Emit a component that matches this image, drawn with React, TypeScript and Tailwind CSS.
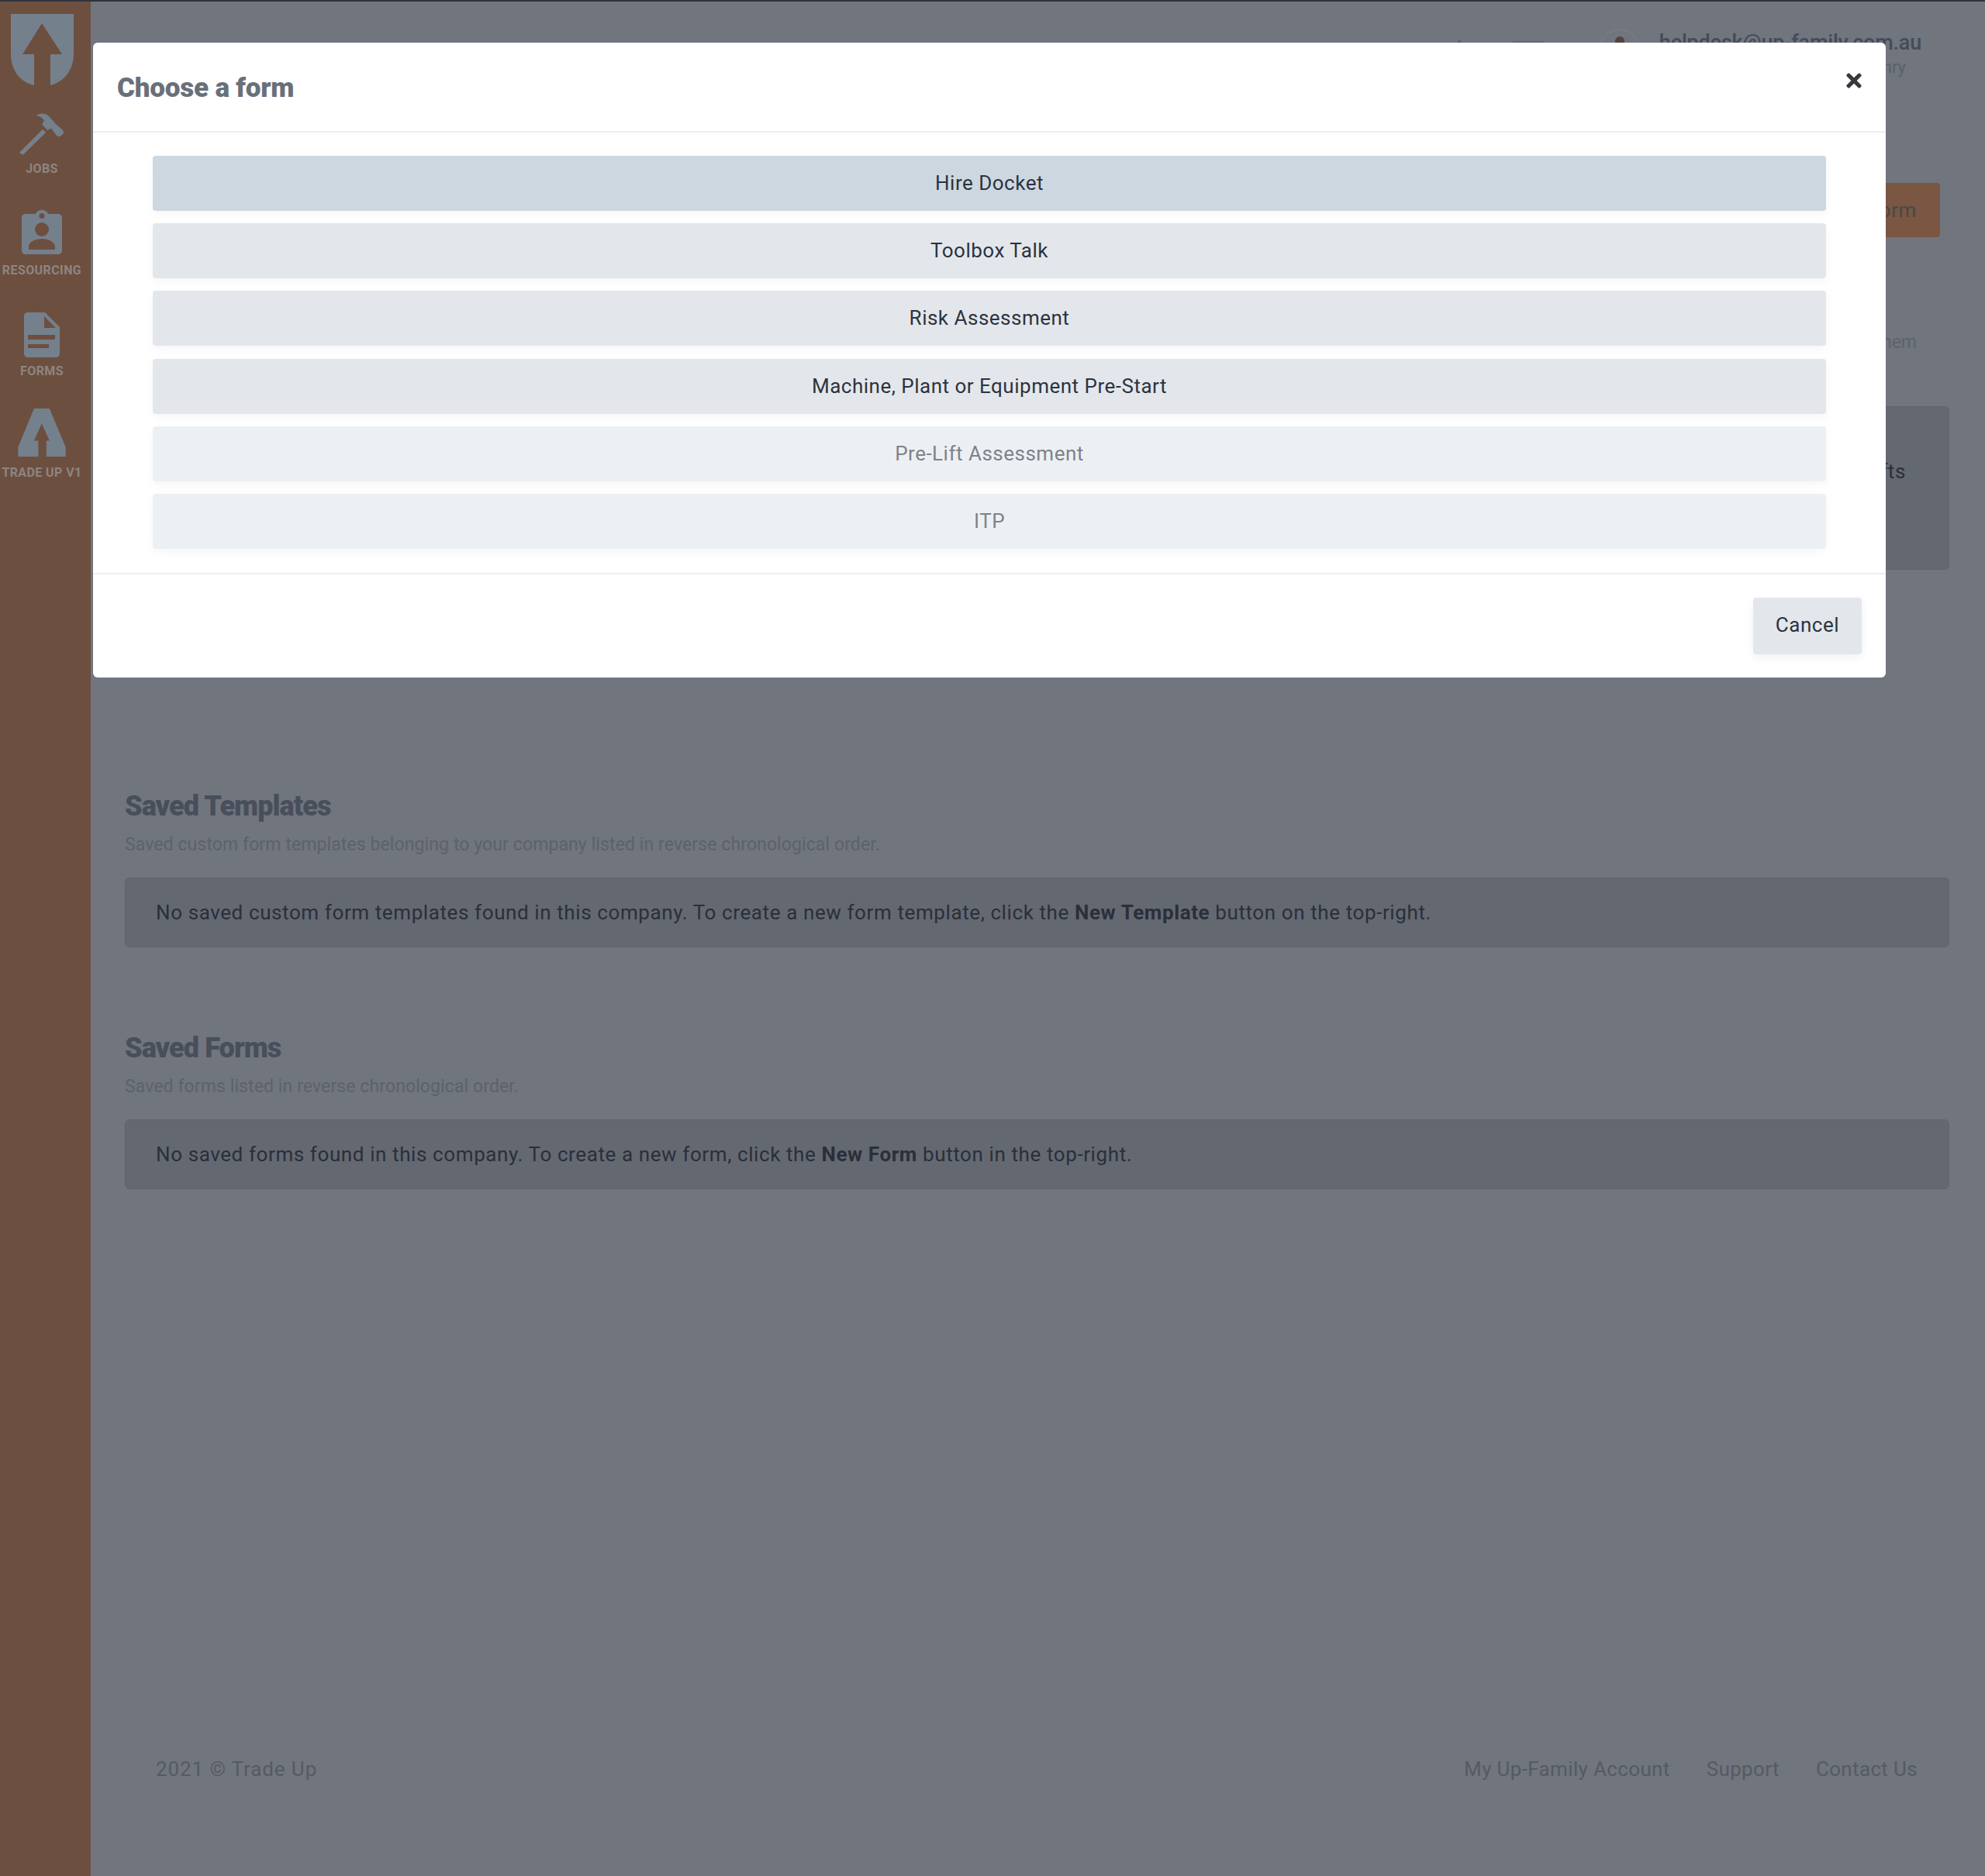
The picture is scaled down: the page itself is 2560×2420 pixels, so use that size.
import React from "react";
import { FaTimes } from "react-icons/fa";

const forms = [
  { label: "Hire Docket", cls: "bg-[#cdd7e0] text-[#2b3340]" },
  { label: "Toolbox Talk", cls: "bg-[#e3e7eb] text-[#2b3340]" },
  { label: "Risk Assessment", cls: "bg-[#e3e7eb] text-[#2b3340]" },
  { label: "Machine, Plant or Equipment Pre-Start", cls: "bg-[#e3e7eb] text-[#2b3340]" },
  { label: "Pre-Lift Assessment", cls: "bg-[#edf0f3] text-[#7c838c]" },
  { label: "ITP", cls: "bg-[#edf0f3] text-[#7c838c]" },
];

function NavLabel({ children, className }: { children: React.ReactNode; className: string }) {
  return (
    <div className={`text-[16px] leading-[20px] font-bold tracking-[0.4px] text-[#8c8581] whitespace-nowrap text-center ${className}`}>
      {children}
    </div>
  );
}

function Sidebar() {
  return (
    <aside className="w-[117px] shrink-0 bg-[#6d4f3f] flex flex-col pt-[16px] pr-[9px]">
      <div className="flex justify-center">
        <svg width="81" height="92" viewBox="0 0 81 92" className="text-[#75808d]" fill="currentColor">
          <path d="M0 0H81V52C81 74 66 89 51 92V52H66L40 12L15 52H30V92C14 89 0 74 0 52Z" />
        </svg>
      </div>
      <div className="flex justify-center mt-[36px]">
        <svg width="58" height="54" viewBox="0 0 58 54" className="text-[#75808d]" fill="currentColor">
          <path d="M0 50.7L30 20.7L34.3 24.7L4.3 54Z" />
          <path d="M21.7 3C26 0 32 -0.5 37 3L43.5 10L46 13L56 22Q58 25 56 27L53 29.5Q50.5 31 48 29L41 19.5L36 22L29 14L32 10C31 7 27 4 21.7 3Z" />
        </svg>
      </div>
      <NavLabel className="mt-[8px]">JOBS</NavLabel>
      <div className="flex justify-center mt-[43px]">
        <svg width="52" height="57" viewBox="0 0 52 57" className="text-[#75808d]" fill="currentColor">
          <path fillRule="evenodd" d="M5 5H18C19 2 22 0 26 0C30 0 33 2 34 5H47C50 5 52 7 52 10V52C52 55 50 57 47 57H5C2 57 0 55 0 52V10C0 7 2 5 5 5ZM26 4A3.5 3.5 0 1 0 26 11A3.5 3.5 0 1 0 26 4ZM26 16A9 9 0 1 0 26 34A9 9 0 1 0 26 16ZM9 51H43V47C43 41 34 37 26 37C18 37 9 41 9 47Z" />
        </svg>
      </div>
      <NavLabel className="mt-[11px]">RESOURCING</NavLabel>
      <div className="flex justify-center mt-[44px]">
        <svg width="46" height="58" viewBox="0 0 46 58" className="text-[#75808d]" fill="currentColor">
          <path fillRule="evenodd" d="M5 0H27L46 19V53C46 56 44 58 41 58H5C2 58 0 56 0 53V5C0 2 2 0 5 0ZM26 5V20H41ZM5 29V35H40V29ZM5 41V46H32V41Z" />
        </svg>
      </div>
      <NavLabel className="mt-[8px]">FORMS</NavLabel>
      <div className="flex justify-center mt-[38px]">
        <svg width="62" height="62" viewBox="0 0 185 187" className="text-[#75808d]" fill="currentColor">
          <path d="M0 187H79V125H62L92 58L122 125H110V187H185V150L122 0H62L0 150Z" />
        </svg>
      </div>
      <NavLabel className="mt-[11px]">TRADE UP V1</NavLabel>
    </aside>
  );
}

function EmptyAlert({ children }: { children: React.ReactNode }) {
  return (
    <div className="h-[90px] flex items-center px-[39px] bg-[#646871] border border-[#5f636c] rounded-[6px] text-[26px] tracking-[0.6px] text-[#2a2f3a]">
      <p>{children}</p>
    </div>
  );
}

function Background() {
  return (
    <main className="flex-1 min-w-0 flex flex-col bg-[#70757e] pl-[44px] pr-[46px]">
      <header className="h-[110px] flex justify-end items-start pt-[36px]">
        <div className="w-[4px] h-[20px] mt-[14px] mr-[67px] bg-[#5a5f69]" />
        <div className="w-[40px] h-[12px] mt-[15px] mr-[71px] bg-[#62666f]" />
        <div className="w-[54px] h-[54px] rounded-full border border-[#7b8089] flex justify-center mr-[24px]">
          <div className="w-[12px] h-[22px] mt-[8px] rounded-full bg-[#4f4440]" />
        </div>
        <div className="pr-[36px]">
          <div className="text-[27px] leading-[34px] font-medium tracking-[-0.2px] text-[#454b58]">helpdesk@up-family.com.au</div>
          <div className="text-[22px] leading-[30px] text-[#5a606a] text-right pr-[20px]">Masonry</div>
        </div>
      </header>
      <div className="flex justify-end mt-[124px] pr-[12px]">
        <div className="h-[70px] px-[30px] flex items-center rounded-[4px] bg-[#7a5643] text-[26px] tracking-[0.6px] text-[#484848]">New Form</div>
      </div>
      <p className="mt-[118px] pr-[42px] text-right text-[23px] leading-[36px] text-[#5c626c]">Forms that are available to your company are listed here, click to open them</p>
      <div className="mt-[64px] h-[211px] bg-[#646871] rounded-[6px] border border-[#5f636c] pr-[55px] pt-[63px] text-right text-[26px] leading-[40px] tracking-[0.6px] text-[#2a2f3a]">
        Use the buttons above to start a new form or continue your saved drafts
      </div>
      <h2 className="mt-[283px] text-[36px] leading-[44px] font-black tracking-[-0.9px] text-[#484e5a]">Saved Templates</h2>
      <p className="mt-[10px] text-[23px] leading-[36px] tracking-[0.1px] text-[#5c626c]">Saved custom form templates belonging to your company listed in reverse chronological order.</p>
      <div className="mt-[24px]">
        <EmptyAlert>
          No saved custom form templates found in this company. To create a new form template, click the <strong>New Template</strong> button on the top-right.
        </EmptyAlert>
      </div>
      <h2 className="mt-[108px] text-[36px] leading-[44px] font-black tracking-[-0.9px] text-[#484e5a]">Saved Forms</h2>
      <p className="mt-[10px] text-[23px] leading-[36px] tracking-[0.1px] text-[#5c626c]">Saved forms listed in reverse chronological order.</p>
      <div className="mt-[24px]">
        <EmptyAlert>
          No saved forms found in this company. To create a new form, click the <strong>New Form</strong> button in the top-right.
        </EmptyAlert>
      </div>
      <footer className="mt-auto pb-[118px] pl-[40px] pr-[41px] flex justify-between text-[26px] leading-[40px] text-[#555a64]">
        <span className="tracking-[0.9px]">2021 © Trade Up</span>
        <nav className="flex gap-[47px] tracking-[0.35px]">
          <span>My Up-Family Account</span>
          <span>Support</span>
          <span>Contact Us</span>
        </nav>
      </footer>
    </main>
  );
}

function Modal() {
  return (
    <div className="absolute left-[120px] top-[55px] w-[2312px] h-[819px] bg-white rounded-[6px] flex flex-col">
      <div className="h-[116px] shrink-0 border-b-2 border-[#eceef0] pl-[31px] pr-[27px] flex justify-between">
        <h1 className="mt-[36px] text-[35px] leading-[46px] font-black tracking-[-0.2px] text-[#697079]">Choose a form</h1>
        <FaTimes className="mt-[35px] w-[28px] h-[28px] text-[#343a40]" />
      </div>
      <div className="px-[77px] pt-[30px] pb-[31px] flex flex-col gap-[16.2px] border-b-2 border-[#eceef0]">
        {forms.map((f) => (
          <div
            key={f.label}
            className={`h-[71px] rounded-[4px] flex items-center justify-center text-[26px] tracking-[0.5px] shadow-[0_4px_12px_rgba(0,0,0,0.04)] ${f.cls}`}
          >
            {f.label}
          </div>
        ))}
      </div>
      <div className="flex justify-end pt-[30px] pr-[31px]">
        <div className="w-[140px] h-[73px] pb-[2px] rounded-[4px] bg-[#e3e7eb] flex items-center justify-center text-[26px] tracking-[0.55px] text-[#2b3340] shadow-[0_4px_12px_rgba(0,0,0,0.06)]">
          Cancel
        </div>
      </div>
    </div>
  );
}

export default function App() {
  return (
    <div className="relative w-full h-[2420px] overflow-hidden flex flex-col font-['Roboto',sans-serif]">
      <div className="h-[2px] shrink-0 bg-[#2f333a]" />
      <div className="flex-1 min-h-0 flex">
        <Sidebar />
        <Background />
      </div>
      <Modal />
    </div>
  );
}
